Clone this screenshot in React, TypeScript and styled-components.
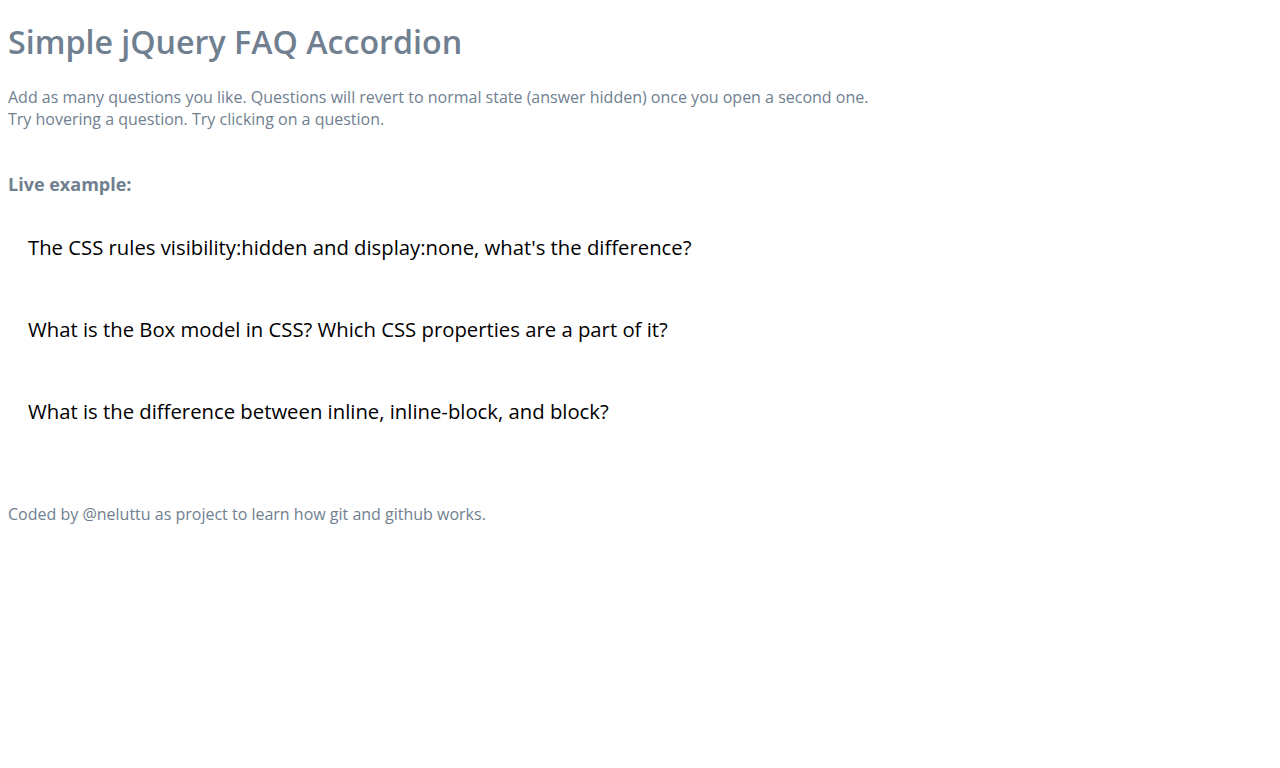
import React, { useState } from "react";
import styled, { createGlobalStyle } from "styled-components";

const GlobalStyle = createGlobalStyle`
  body {
    margin: 8px;
    background: #fff;
    font-family: "Open Sans", "Liberation Sans", sans-serif;
    color: #708090;
  }
`;

const Title = styled.h1`
  font-size: 32.2px;
  font-weight: 600;
  margin: 12px 0 23px;
`;

const Intro = styled.p`
  font-size: 16px;
  margin: 0 0 42px;
`;

const SubTitle = styled.h3`
  font-size: 18px;
  font-weight: 700;
  margin: 0 0 29px;
`;

const Faq = styled.div`
  display: flex;
  flex-direction: column;
`;

const Question = styled.div`
  padding: 8px 20px;
  margin-bottom: 38px;
  font-size: 20.3px;
  color: #000;
  cursor: pointer;

  &:hover {
    color: #708090;
  }
`;

const Answer = styled.div<{ $open: boolean }>`
  display: ${(p) => (p.$open ? "block" : "none")};
  padding: 10px 20px 0;
  font-size: 16px;
  color: #708090;
`;

const Footer = styled.p`
  font-size: 16px;
  margin: 32px 0 0;
`;

const items = [
  {
    q: "The CSS rules visibility:hidden and display:none, what's the difference?",
    a: "display:none removes the element from the layout; visibility:hidden hides it but keeps its space.",
  },
  {
    q: "What is the Box model in CSS? Which CSS properties are a part of it?",
    a: "Every element is a box made of content, padding, border and margin.",
  },
  {
    q: "What is the difference between inline, inline-block, and block?",
    a: "Block takes the full width, inline flows with text, inline-block flows but accepts width and height.",
  },
];

export default function App() {
  const [open, setOpen] = useState<number | null>(null);

  return (
    <>
      <GlobalStyle />
      <Title>Simple jQuery FAQ Accordion</Title>
      <Intro>
        Add as many questions you like. Questions will revert to normal state
        (answer hidden) once you open a second one.
        <br />
        Try hovering a question. Try clicking on a question.
      </Intro>
      <SubTitle>Live example:</SubTitle>
      <Faq>
        {items.map((item, i) => (
          <div key={i}>
            <Question onClick={() => setOpen(open === i ? null : i)}>
              {item.q}
            </Question>
            <Answer $open={open === i}>{item.a}</Answer>
          </div>
        ))}
      </Faq>
      <Footer>Coded by @neluttu as project to learn how git and github works.</Footer>
    </>
  );
}
